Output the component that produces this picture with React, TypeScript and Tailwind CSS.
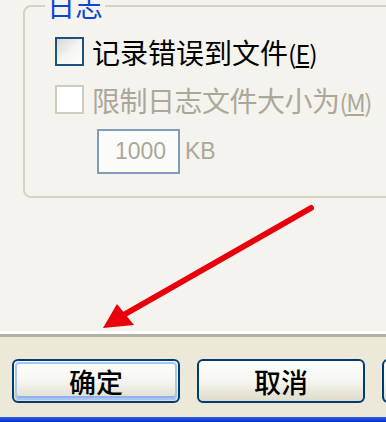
import React from 'react';

const cjk = { fontFamily: '"Noto Sans CJK SC", "Noto Sans", sans-serif' };
const latin = { fontFamily: '"Liberation Sans", Arial, sans-serif' };

function XpButton({ label, isDefault = false }: { label: string; isDefault?: boolean }) {
  return (
    <button
      className="shrink-0 w-[168px] h-[44px] rounded-[6px] border-2 border-[#003c74] bg-gradient-to-b from-white via-[#f6f5f0] to-[#dedbcc] p-[1px]"
    >
      <div
        className={`w-full h-full rounded-[4px] flex items-center justify-center text-[27px] leading-none font-medium text-black ${
          isDefault ? 'border-2 border-[#a9c6f3] shadow-[inset_0_-2px_0_#8fb2ef]' : 'border-2 border-transparent'
        }`}
        style={cjk}
      >
        {label}
      </div>
    </button>
  );
}

export default function App() {
  return (
    <div className="relative w-[386px] h-[422px] overflow-hidden bg-[#ece9d8] flex flex-col select-none">
      {/* tab page */}
      <div className="h-[331px] shrink-0 bg-[#f4f3ee] pt-[5px] pl-[23px]">
        <div className="relative w-[420px] h-[193px] border-2 border-[#d5d3c4] rounded-[8px] pl-[30px] pt-[30px]">
          <div
            className="absolute left-[20px] top-[-16px] bg-[#f4f3ee] px-[2px] text-[28px] leading-[28px] text-[#0b46d4]"
            style={cjk}
          >
            日志
          </div>

          <div className="flex items-center h-[29px] gap-[8px]">
            <div className="w-[29px] h-[29px] border-2 border-[#1c5180] bg-gradient-to-br from-[#d9d8d0] via-[#f4f4f0] to-white" />
            <span className="text-[28px] leading-none text-black" style={cjk}>
              记录错误到文件<span className="text-[25px] tracking-[-1px]">(<span className="underline underline-offset-2">E</span>)</span>
            </span>
          </div>

          <div className="flex items-center h-[29px] gap-[8px] mt-[19px]">
            <div className="w-[29px] h-[29px] border-2 border-[#cfcdc0] bg-white" />
            <span className="text-[28px] leading-none text-[#aca899] tracking-[-0.5px]" style={cjk}>
              限制日志文件大小为<span className="text-[24px] tracking-[-1.5px]">(<span className="underline underline-offset-2">M</span>)</span>
            </span>
          </div>

          <div className="flex items-center mt-[15px] ml-[42px] gap-[5px]">
            <div
              className="w-[83px] h-[45px] border-2 border-[#7f9db9] bg-[#fbfbf9] flex items-center pl-[16px] text-[23px] text-[#aca899]"
              style={latin}
            >
              1000
            </div>
            <span className="text-[23px] text-[#aca899]" style={latin}>
              KB
            </span>
          </div>
        </div>
      </div>

      {/* separator */}
      <div className="h-[3px] shrink-0 bg-white" />
      <div className="h-[3px] shrink-0 bg-[#b4b2a6]" />

      {/* button strip */}
      <div className="flex-1 flex items-start gap-[17px] pl-[12px] pt-[22px]">
        <XpButton label="确定" isDefault />
        <XpButton label="取消" />
        <XpButton label="应用" />
      </div>

      {/* window frame */}
      <div className="h-[5px] shrink-0 bg-gradient-to-b from-[#2a5ee8] to-[#0833c8]" />

      {/* annotation arrow */}
      <svg className="absolute inset-0 pointer-events-none" width="386" height="422" viewBox="0 0 386 422">
        <line x1="311" y1="208" x2="120" y2="317" stroke="#e8000c" strokeWidth="6" strokeLinecap="round" />
        <polygon points="103,328 117,304 134,325" fill="#e8000c" />
      </svg>
    </div>
  );
}
